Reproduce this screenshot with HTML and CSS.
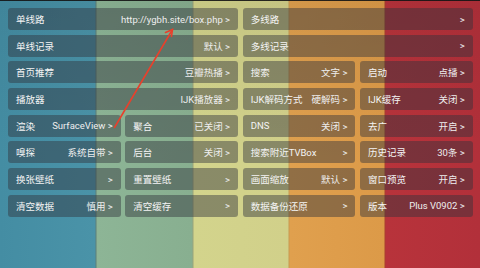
FILE: index.html
```html
<!DOCTYPE html>
<html>

<head>
    <title>设置</title>
    <link rel="stylesheet" href="styles.css">
</head>

<body>

<div class="settings">
    <div class="item wide"><span>单线路</span><span class="val">http://ygbh.site/box.php &gt;</span></div>
    <div class="item wide"><span>多线路</span><span class="val">&gt;</span></div>

    <div class="item wide"><span>单线记录</span><span class="val">默认 &gt;</span></div>
    <div class="item wide"><span>多线记录</span><span class="val">&gt;</span></div>

    <div class="item wide"><span>首页推荐</span><span class="val">豆瓣热播 &gt;</span></div>
    <div class="item"><span>搜索</span><span class="val">文字 &gt;</span></div>
    <div class="item"><span>启动</span><span class="val">点播 &gt;</span></div>

    <div class="item wide"><span>播放器</span><span class="val">IJK播放器 &gt;</span></div>
    <div class="item"><span>IJK解码方式</span><span class="val">硬解码 &gt;</span></div>
    <div class="item"><span>IJK缓存</span><span class="val">关闭 &gt;</span></div>

    <div class="item"><span>渲染</span><span class="val">SurfaceView &gt;</span></div>
    <div class="item"><span>聚合</span><span class="val">已关闭 &gt;</span></div>
    <div class="item"><span>DNS</span><span class="val">关闭 &gt;</span></div>
    <div class="item"><span>去广</span><span class="val">开启 &gt;</span></div>

    <div class="item"><span>嗅探</span><span class="val">系统自带 &gt;</span></div>
    <div class="item"><span>后台</span><span class="val">关闭 &gt;</span></div>
    <div class="item"><span>搜索附近TVBox</span><span class="val">&gt;</span></div>
    <div class="item"><span>历史记录</span><span class="val">30条 &gt;</span></div>

    <div class="item"><span>换张壁纸</span><span class="val">&gt;</span></div>
    <div class="item"><span>重置壁纸</span><span class="val">&gt;</span></div>
    <div class="item"><span>画面缩放</span><span class="val">默认 &gt;</span></div>
    <div class="item"><span>窗口预览</span><span class="val">开启 &gt;</span></div>

    <div class="item"><span>清空数据</span><span class="val">慎用 &gt;</span></div>
    <div class="item"><span>清空缓存</span><span class="val">&gt;</span></div>
    <div class="item"><span>数据备份还原</span><span class="val">&gt;</span></div>
    <div class="item"><span>版本</span><span class="val">Plus V0902 &gt;</span></div>
</div> <!-- settings -->

<!-- red annotation arrow -->
<svg class="arrow" width="480" height="268" viewBox="0 0 480 268">
    <g stroke="#e8402c" stroke-width="1.6" stroke-linecap="round" fill="none">
        <line x1="114.5" y1="127.5" x2="172.5" y2="29.5"/>
        <polyline points="165.5,32.5 172.5,29.5 171.5,36.5"/>
    </g>
</svg>

</body>

</html>
```

FILE: styles.css
```css
body {
    margin: 0;
    width: 480px;
    height: 268px;
    overflow: hidden;
    position: relative;
    font-family: Roboto, "Noto Sans CJK SC", sans-serif;
    background:
        linear-gradient(to bottom, rgba(20, 20, 20, 0.9) 0, rgba(20, 20, 20, 0.9) 1px, transparent 1px),
        linear-gradient(to bottom, rgba(0, 0, 0, 0.06), rgba(0, 0, 0, 0) 60%),
        linear-gradient(to right,
            #448da3 0, #4a93a8 95px, #5d7f78 96px,
            #8db596 97px, #88af90 192px, #9aa47a 193px,
            #d3d48c 194px, #d1d08a 288px, #c79a52 289px,
            #e0a04e 290px, #dc9a48 384px, #a8402f 385px,
            #b8333b 386px, #b2303a 480px);
}

.settings {
    display: grid;
    grid-template-columns: repeat(4, 1fr);
    grid-auto-rows: 22px;
    gap: 4.7px 4.6px;
    padding: 8px 7.3px 0 8px;
}

.item {
    display: flex;
    justify-content: space-between;
    align-items: center;
    padding: 0 8px;
    border-radius: 3px;
    background-color: rgba(48, 50, 60, 0.45);
    color: #f4f4f4;
    font-size: 9.5px;
    white-space: nowrap;
}

.item.wide {
    grid-column: span 2;
}

.val {
    color: #eeeeee;
}

.arrow {
    position: absolute;
    top: 0;
    left: 0;
}
```
